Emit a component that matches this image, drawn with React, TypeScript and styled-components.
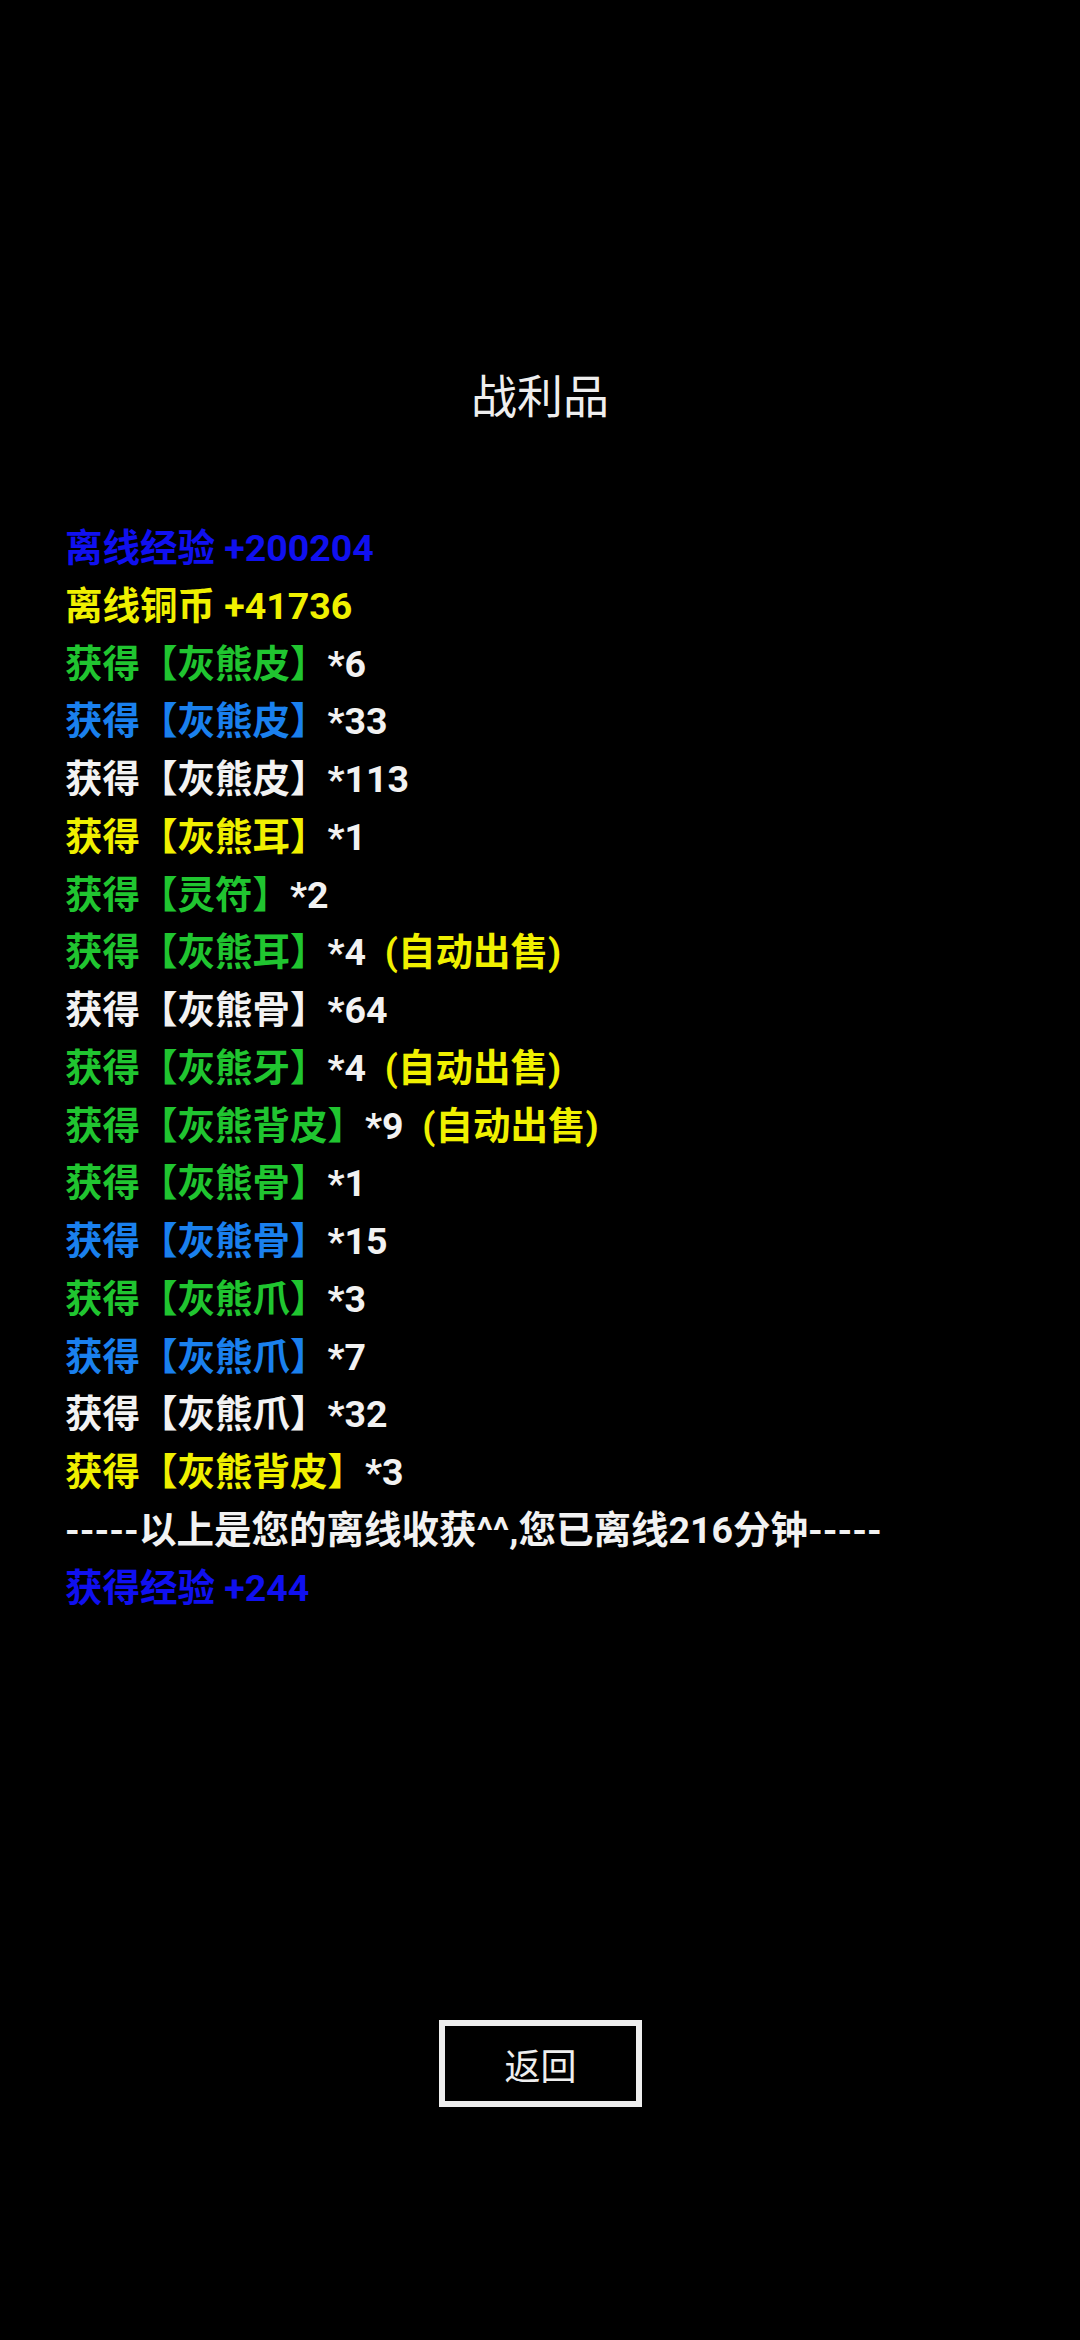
import React from 'react';
import styled, { createGlobalStyle } from 'styled-components';

const GlobalStyle = createGlobalStyle`
  html, body {
    margin: 0;
    padding: 0;
    background: #000;
  }
`;

const colors = {
  blue: '#1010f0',
  yellow: '#f0f000',
  green: '#20c530',
  sky: '#1a80ee',
  white: '#f2f2f2',
};

type Tone = keyof typeof colors;

interface Entry {
  tone: Tone;
  text?: string;
  name?: string;
  count?: string;
  sold?: boolean;
}

const lines: Entry[] = [
  { tone: 'blue', text: '离线经验 +200204' },
  { tone: 'yellow', text: '离线铜币 +41736' },
  { tone: 'green', name: '灰熊皮', count: '6' },
  { tone: 'sky', name: '灰熊皮', count: '33' },
  { tone: 'white', name: '灰熊皮', count: '113' },
  { tone: 'yellow', name: '灰熊耳', count: '1' },
  { tone: 'green', name: '灵符', count: '2' },
  { tone: 'green', name: '灰熊耳', count: '4', sold: true },
  { tone: 'white', name: '灰熊骨', count: '64' },
  { tone: 'green', name: '灰熊牙', count: '4', sold: true },
  { tone: 'green', name: '灰熊背皮', count: '9', sold: true },
  { tone: 'green', name: '灰熊骨', count: '1' },
  { tone: 'sky', name: '灰熊骨', count: '15' },
  { tone: 'green', name: '灰熊爪', count: '3' },
  { tone: 'sky', name: '灰熊爪', count: '7' },
  { tone: 'white', name: '灰熊爪', count: '32' },
  { tone: 'yellow', name: '灰熊背皮', count: '3' },
  { tone: 'white', text: '-----以上是您的离线收获^^,您已离线216分钟-----' },
  { tone: 'blue', text: '获得经验 +244' },
];

const Page = styled.div`
  min-height: 2340px;
  background: #000;
  font-family: Roboto, 'Noto Sans CJK SC', sans-serif;
  display: flex;
  flex-direction: column;
  align-items: stretch;
`;

const Title = styled.h1`
  margin: 367px 0 0;
  text-align: center;
  color: #eeeeee;
  font-size: 46px;
  font-weight: 400;
  line-height: 60px;
`;

const Log = styled.div`
  margin-top: 93px;
  padding-left: 65px;
  display: flex;
  flex-direction: column;
`;

const Line = styled.div<{ $tone: Tone }>`
  font-size: 37.5px;
  font-weight: 700;
  line-height: 57.75px;
  white-space: nowrap;
  color: ${p => colors[p.$tone]};
`;

const Count = styled.span`
  color: ${colors.white};
`;

const Sold = styled.span`
  margin-left: 0.5em;
  color: ${colors.yellow};
`;

const Footer = styled.div`
  margin-top: 403px;
  display: flex;
  justify-content: center;
`;

const BackButton = styled.button`
  width: 203px;
  height: 87px;
  box-sizing: border-box;
  background: #000;
  border: 6px solid #eeeeee;
  border-radius: 0;
  color: #eeeeee;
  font-family: Roboto, 'Noto Sans CJK SC', sans-serif;
  font-size: 36px;
  font-weight: 400;
  padding: 0;
  margin-left: 1px;
  cursor: pointer;
`;

const App: React.FC = () => (
  <>
    <GlobalStyle />
    <Page>
      <Title>战利品</Title>
      <Log>
        {lines.map((l, i) => (
          <Line key={i} $tone={l.tone}>
            {l.text ?? (
              <>
                获得【{l.name}】<Count>*{l.count}</Count>
                {l.sold && <Sold>(自动出售)</Sold>}
              </>
            )}
          </Line>
        ))}
      </Log>
      <Footer>
        <BackButton>返回</BackButton>
      </Footer>
    </Page>
  </>
);

export default App;
